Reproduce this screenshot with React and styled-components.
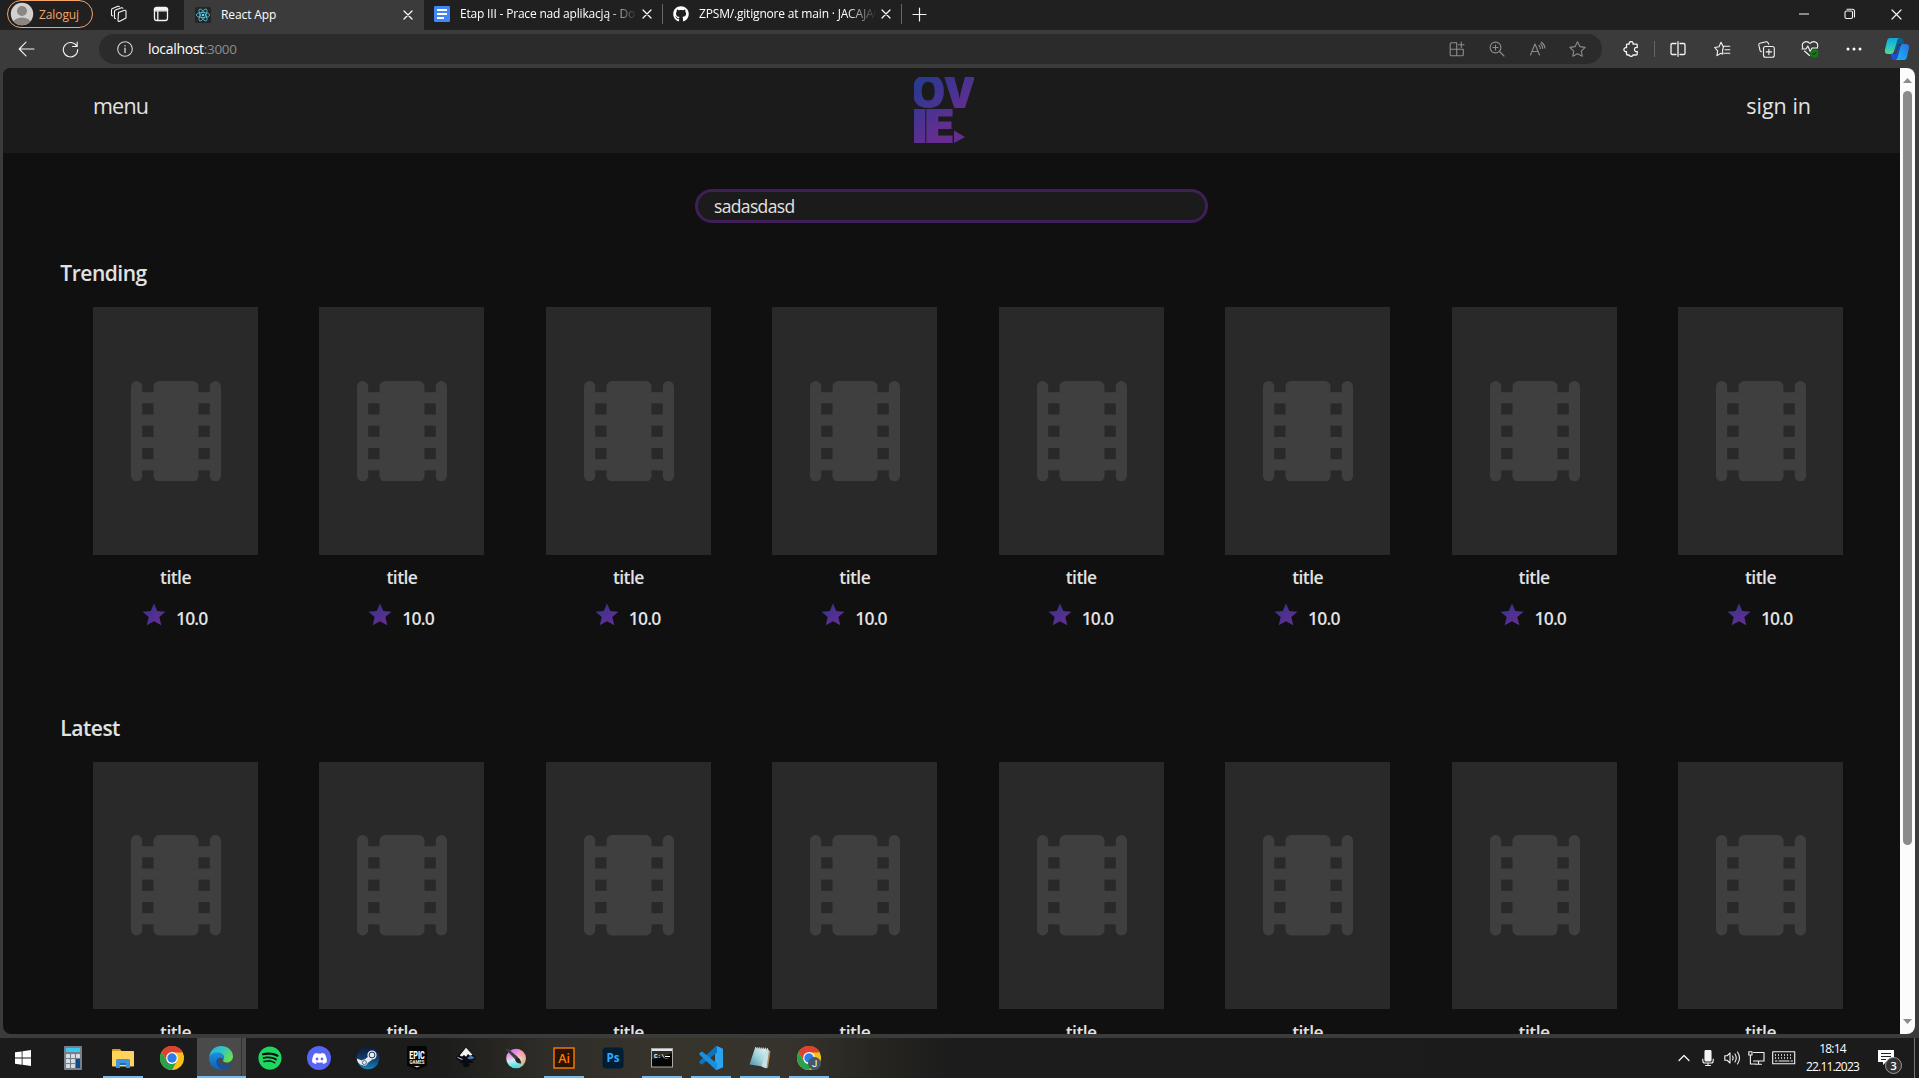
import React from "react";
import styled, { createGlobalStyle } from "styled-components";
import { FaGithub, FaSpotify, FaDiscord } from "react-icons/fa";

const GlobalStyle = createGlobalStyle`
  * { box-sizing: border-box; }
  body { margin: 0; background: #3b3b3b; font-family: "Open Sans", "Noto Sans", sans-serif; overflow: hidden; }
  svg { display: block; flex: none; }
`;

const Screen = styled.div`
  display: flex;
  flex-direction: column;
  width: 1919px;
  height: 1078px;
  background: #3b3b3b;
  overflow: hidden;
`;

/* ---------- browser chrome ---------- */

const TabStrip = styled.div`
  display: flex;
  align-items: flex-start;
  height: 30px;
  padding-left: 7px;
  background: #202020;
  color: #fff;
`;

const LoginPill = styled.div`
  display: flex;
  align-items: center;
  gap: 5px;
  width: 86px;
  height: 28px;
  margin-right: 5px;
  padding-left: 2px;
  border: 1px solid #f3a56a;
  border-radius: 14px;
  color: #f3a56a;
  font-size: 12px;
  letter-spacing: -0.1px;
`;

const IconCell = styled.div`
  display: flex;
  align-items: center;
  justify-content: center;
  flex: none;
  width: ${(p) => p.$w}px;
  height: ${(p) => p.$h || 30}px;
  color: ${(p) => p.$color || "#f4f4f4"};
`;

const Tab = styled.div`
  display: flex;
  align-items: center;
  flex: none;
  width: ${(p) => (p.$active ? 240 : 239)}px;
  height: ${(p) => (p.$active ? 30 : 28)}px;
  margin-left: ${(p) => (p.$active ? 2 : 0)}px;
  padding: 0 11px 0 ${(p) => (p.$active ? 11 : 10)}px;
  background: ${(p) => (p.$active ? "#3b3b3b" : "transparent")};
`;

const TabLabel = styled.span`
  flex: 1;
  min-width: 0;
  margin: 0 6px 0 10px;
  overflow: hidden;
  white-space: nowrap;
  font-size: 12px;
  line-height: 28px;
  letter-spacing: ${(p) => p.$ls}px;
  mask-image: ${(p) => (p.$fade ? "linear-gradient(90deg, #000 84%, transparent 101%)" : "none")};
`;

const Separator = styled.span`
  flex: none;
  width: 1px;
  height: ${(p) => p.$h}px;
  margin: ${(p) => p.$m};
  background: #666;
`;

const WindowControls = styled.div`
  display: flex;
  margin-left: auto;
`;

const Toolbar = styled.div`
  display: flex;
  align-items: center;
  height: 38px;
  padding-left: 5px;
  background: #3b3b3b;
`;

const AddressBar = styled.div`
  display: flex;
  align-items: center;
  width: 1503px;
  height: 30px;
  margin: 0 7px 0 6px;
  padding: 0 5px 0 18px;
  border-radius: 15px;
  background: #2b2b2b;
`;

const Url = styled.div`
  flex: 1;
  margin-left: 15px;
  font-size: 14px;
  line-height: 30px;
  letter-spacing: -0.32px;
  color: #fff;
`;

const Port = styled.span`
  color: #8d8d8d;
  font-size: 13.5px;
`;

/* ---------- page ---------- */

const Viewport = styled.div`
  display: flex;
  width: 1912px;
  height: 966px;
  margin: 0 0 4px 3px;
  border-radius: 8px;
  background: #101010;
  overflow: hidden;
`;

const Page = styled.main`
  width: 1897px;
  height: 966px;
  overflow: hidden;
  color: #e2e2e2;
`;

const Header = styled.header`
  display: grid;
  grid-template-columns: 821px 60px 1fr;
  height: 85px;
  padding: 9px 89px 0 90px;
  background: #1b1b1b;
`;

const HeaderLink = styled.a`
  justify-self: ${(p) => p.$side};
  font-size: 21.5px;
  line-height: 58px;
  letter-spacing: ${(p) => p.$ls}px;
`;

const SearchBox = styled.div`
  width: 513px;
  height: 34px;
  margin: 36px 0 35px 692px;
  padding-left: 16px;
  border: 3px solid #3e1f58;
  border-radius: 17px;
  background: #1b1b1b;
  font-size: 17.5px;
  line-height: 29px;
  letter-spacing: -0.65px;
`;

const Section = styled.section`
  height: 454.6px;
`;

const SectionTitle = styled.h2`
  margin: 0 0 19.2px 57.3px;
  font-size: 21px;
  font-weight: 600;
  line-height: 30px;
  letter-spacing: -0.48px;
`;

const CardRow = styled.div`
  display: flex;
  justify-content: space-between;
  width: 1750px;
  margin-left: 90px;
`;

const Card = styled.article`
  display: flex;
  flex-direction: column;
  align-items: center;
  width: 165px;
  font-size: 17.5px;
  font-weight: 600;
`;

const Poster = styled.div`
  display: flex;
  align-items: center;
  justify-content: center;
  width: 165px;
  height: 247.5px;
  padding-left: 1px;
  background: #292929;
`;

const CardTitle = styled.div`
  margin-top: 10.6px;
  line-height: 24px;
  letter-spacing: -0.55px;
`;

const Rating = styled.div`
  display: flex;
  align-items: flex-start;
  gap: 10px;
  margin-top: 13.7px;
  padding-right: 1.500px;
`;

const Score = styled.span`
  margin-top: 3.5px;
  line-height: 24px;
  letter-spacing: -0.8px;
`;

const Scrollbar = styled.div`
  display: flex;
  flex-direction: column;
  align-items: center;
  width: 15px;
  height: 966px;
  padding: 10px 0;
  background: #fcfcfc;
`;

const Thumb = styled.div`
  width: 9px;
  height: 754px;
  margin: 8px 0 auto;
  border-radius: 5px;
  background: #8b8b8b;
`;

/* ---------- taskbar ---------- */

const TaskbarRoot = styled.div`
  display: flex;
  height: 40px;
  background: linear-gradient(90deg, #1b1b1b 0, #1c1c1b 440px, #2e2c27 540px, #37342c 660px, #35332b 790px, #272621 870px, #1c1c1c 950px, #1b1b1b 100%);
  color: #fff;
`;

const TaskItem = styled.div`
  display: flex;
  align-items: center;
  justify-content: center;
  flex: none;
  width: ${(p) => p.$w || 49}px;
  height: 40px;
  background:
    linear-gradient(${(p) => (p.$open ? "#76b9ed, #76b9ed" : "transparent, transparent")}) center bottom / ${(p) => (p.$active ? 49 : 40)}px 2px no-repeat,
    ${(p) => (p.$active ? "linear-gradient(90deg, #4a4a4a 44px, #303030 44px, #303030 45px, #494949 45px)" : "none")};
  padding-right: ${(p) => (p.$active ? 1 : 0)}px;
`;

const Tray = styled.div`
  display: flex;
  margin-left: auto;
  padding-right: 4px;
`;

const Clock = styled.div`
  width: 67px;
  padding-top: 2px;
  text-align: center;
  font-size: 12px;
  line-height: 18px;
  letter-spacing: -0.83px;
`;

const DesktopEdge = styled.span`
  width: 1px;
  height: 40px;
  margin-left: 1px;
  background: #777;
`;

/* ---------- drawings ---------- */

const Line = ({ w = 16, h = 16, sw = 1.1, children }) => (
  <svg width={w} height={h} viewBox={`0 0 ${w} ${h}`} fill="none" stroke="currentColor" strokeWidth={sw} strokeLinecap="round" strokeLinejoin="round">
    {children}
  </svg>
);

const Avatar = () => (
  <svg width="24" height="24" viewBox="0 0 24 24">
    <defs><clipPath id="avatar"><circle cx="12" cy="12" r="11.2" /></clipPath></defs>
    <g clipPath="url(#avatar)">
      <rect width="24" height="24" fill="#d2d0ce" />
      <circle cx="12" cy="9" r="5" fill="#8a8684" />
      <ellipse cx="12" cy="21.5" rx="9.2" ry="6" fill="#8a8684" />
    </g>
  </svg>
);

const Workspaces = () => (
  <Line w={18} h={18}>
    <path d="M8.5 7.5l6-2.2q1.500-.4 1.500 1v6.600l-6.200 3.300q-1.800.6-1.800-1z" />
    <path d="M5.500 13.500q-1 .2-1-1V6.500q0-1 1-1.400l6-2.300q1-.3 1.400.5" />
    <path d="M2.800 10.800q-1.300.2-1.300-1V4.900q0-1 1-1.400L8 1.300q1-.3 1.400.5" />
  </Line>
);

const TabActions = () => (
  <Line w={16} h={16} sw={1.3}>
    <rect x="1.500" y="1.500" width="13" height="13" rx="2.200" />
    <path d="M1.500 4.800H14.500M4.800 4.800V14" />
    <path d="M2 3.200H14" strokeWidth="2.400" />
  </Line>
);

const ReactLogo = () => (
  <svg width="16" height="16" viewBox="0 0 16 16" fill="none" stroke="#58c4dc" strokeWidth=".8">
    <rect width="16" height="16" rx="1.500" fill="#222628" stroke="none" />
    <circle cx="8" cy="8" r="1.300" fill="#61dafb" stroke="none" />
    {[0, 60, 120].map((a) => <ellipse key={a} cx="8" cy="8" rx="6.700" ry="2.600" transform={`rotate(${a} 8 8)`} />)}
  </svg>
);

const DocsIcon = () => (
  <svg width="16" height="16" viewBox="0 0 16 16">
    <rect width="16" height="16" rx="1.300" fill="#4285f4" />
    <path d="M3 4H13M3 8H13M3 12H10" stroke="#fff" strokeWidth="1.800" />
  </svg>
);

const CloseIcon = ({ s = 10 }) => (
  <Line w={s} h={s} sw={1.2}><path d={`M1 1L${s - 1} ${s - 1}M${s - 1} 1L1 ${s - 1}`} /></Line>
);

const Copilot = () => (
  <svg width="26" height="24" viewBox="0 0 26 24">
    <defs>
      <linearGradient id="cpA" x1="0" y1="0" x2="0" y2="1"><stop offset="0" stopColor="#12a5d8" /><stop offset=".4" stopColor="#1ec0d3" /><stop offset="1" stopColor="#57d98b" /></linearGradient>
      <linearGradient id="cpB" x1="1" y1="0" x2="0" y2="1"><stop offset="0" stopColor="#2c6fe0" /><stop offset="1" stopColor="#18b9f5" /></linearGradient>
    </defs>
    <path d="M11 1h5.500q1.800 0 2.500 2l1 4h-4q-2 0-2.600 2L11 17z" fill="#0b5f8f" />
    <path d="M6.500 17H12l3-8 2 0-5 14H9.500Q8 23 7.500 21z" fill="#1c4fd6" />
    <path d="M6 1h9q-1.500 1-2 3l-3 10.500Q9.300 17 7 17H4Q.2 17 1 12.500L3 4Q3.700 1 6 1z" fill="url(#cpA)" />
    <path d="M18.500 7H22q3.700 0 2.900 4.500L23 20q-.7 3-3 3h-8.500q1.500-.8 2-2.500l3-10.500Q17 7 18.500 7z" fill="url(#cpB)" />
  </svg>
);

const MovieLogo = () => (
  <svg width="60" height="66" viewBox="0 0 60 66">
    <defs>
      <linearGradient id="brand" gradientUnits="userSpaceOnUse" x1="5" y1="8" x2="38" y2="48">
        <stop offset="0" stopColor="#2b3990" /><stop offset="1" stopColor="#662d91" />
      </linearGradient>
      <clipPath id="brandShape">
        <text transform="translate(-3.800 30.500) scale(.98 1)" fontFamily="Open Sans" fontWeight="800" fontSize="46">O</text>
        <text transform="translate(29.300 31)" fontFamily="Open Sans" fontWeight="800" fontSize="47">V</text>
        <text transform="translate(-5.200 66) scale(1.300 1)" fontFamily="Open Sans" fontWeight="800" fontSize="47">I</text>
        <text transform="translate(7.600 66) scale(1.320 1)" fontFamily="Open Sans" fontWeight="800" fontSize="47">E</text>
        <path d="M40 53.500L51 60L40 66z" />
      </clipPath>
    </defs>
    <rect width="60" height="66" fill="url(#brand)" clipPath="url(#brandShape)" />
  </svg>
);

const Film = () => (
  <svg width="90" height="100.5" viewBox="0 0 8 9" preserveAspectRatio="none" fill="#3f3f3f">
    <rect x="0" y="0" width="1" height="9" rx=".5" />
    <rect x="7" y="0" width="1" height="9" rx=".5" />
    <rect x="2" y="0" width="4" height="9" rx=".5" />
    {[1, 3, 5, 7].map((y) => <rect key={y} x=".5" y={y} width="7" height="1" />)}
  </svg>
);

const RatingStar = () => (
  <svg width="24" height="23" viewBox="0 0 24 23">
    <defs><linearGradient id="star" x1="0" y1="0" x2=".7" y2="1"><stop offset="0" stopColor="#2f3590" /><stop offset="1" stopColor="#662d91" /></linearGradient></defs>
    <path d="M12 .5l3.300 7.400 8.200.8-6.200 5.200 2 8.300L12 18.200l-7.300 4 2-8.300L.5 8.700l8.200-.8z" fill="url(#star)" />
  </svg>
);

const Arrow = ({ down }) => (
  <svg width="9" height="5" viewBox="0 0 9 5"><path d={down ? "M0 0H9L4.500 5z" : "M0 5H9L4.500 0z"} fill="#8b8b8b" /></svg>
);

const Art = ({ w = 24, h = 24, children }) => <svg width={w} height={h} viewBox={`0 0 ${w} ${h}`}>{children}</svg>;

const WindowsLogo = () => (
  <Art w={16} h={16}><path d="M0 2.300L6.700 1.400V7.600H0zM7.500 1.300L16 0V7.600H7.500zM0 8.400H6.700V14.700L0 13.700zM7.500 8.400H16V16L7.500 14.800z" fill="#fff" /></Art>
);

const Calculator = () => (
  <Art w={18}>
    <rect width="18" height="24" rx="1" fill="#75808b" />
    <rect x="2" y="2" width="14" height="4" fill="#3cc8f5" />
    {[8, 13, 18].map((y) => [2, 7, 12].map((x) => (
      <rect key={`${x}-${y}`} x={x} y={y} width="4" height="4" rx=".4" fill="#d8dde2" />
    )))}
    <rect x="12" y="13" width="4" height="9" fill="#0e4a8c" />
  </Art>
);

const Explorer = () => (
  <Art w={22} h={20}>
    <path d="M0 1.500Q0 1 .8 1H8l2 2.500V8H0z" fill="#d99a18" />
    <rect y="3" width="22" height="15.500" rx=".8" fill="#ffd25f" />
    <path d="M4 20V12.500Q4 11 5.500 11h11Q18 11 18 12.500V20H14V15H8v5z" fill="#3e94da" />
    <path d="M8 15h6v2H8z" fill="#1f6fb8" />
  </Art>
);

const Chrome = ({ badge }) => (
  <Art>
    <circle cx="12" cy="12" r="12" fill="#fbc116" />
    <path d="M12 6.500H22.700A12 12 0 0 0 1.600 6L6.800 15z" fill="#dd4132" />
    <path d="M1.600 6L6.800 15Q9 18.500 12 18L17 15L12 24A12 12 0 0 1 1.600 6z" fill="#2aa14c" />
    <circle cx="12" cy="12" r="5.900" fill="#fff" />
    <circle cx="12" cy="12" r="4.700" fill="#2f7de9" />
    {badge && <circle cx="17.500" cy="17.500" r="6.500" fill="#455a68" />}
    {badge && <text x="17.500" y="21" textAnchor="middle" fontSize="9.500" fontFamily="Roboto" fill="#fff">J</text>}
  </Art>
);

const Edge = () => (
  <Art>
    <defs>
      <linearGradient id="edgeA" x1="0" y1="0" x2="1" y2=".5"><stop offset="0" stopColor="#2fa8e0" /><stop offset=".55" stopColor="#33c5c4" /><stop offset="1" stopColor="#68dd55" /></linearGradient>
      <linearGradient id="edgeB" x1="0" y1="0" x2="0" y2="1"><stop offset="0" stopColor="#1b8fe0" /><stop offset="1" stopColor="#0c62b6" /></linearGradient>
    </defs>
    <path d="M.2 11C1 4.500 6 0 12 0c7 0 12 5 12 10.500 0 3.800-3 6-6 6-2.500 0-4-1-4-2 0-.8 1-1.200 1-3C15 9 12.500 7 9 7 5 7 1.500 8.700.2 11z" fill="url(#edgeA)" />
    <path d="M0 12C.6 8.500 4.500 6.500 8.500 6.500c4 0 6.500 2.500 6.500 5 0 1-.4 1.800-.9 2.400C13.500 10.500 7.500 11 7.500 16c0 4 4 7.500 8 7.300C8 25.500 0 20.500 0 12z" fill="url(#edgeB)" />
    <path d="M9.500 12Q7 13.700 7.500 17c.7 4 5 7 9 6 3-.8 5-3 5.700-4.800.2-.4-.1-.6-.5-.4C15 21 9 18 9.500 12z" fill="#1452a0" />
  </Art>
);

const SpotifyIcon = () => (
  <Art>
    <circle cx="12" cy="12" r="11.500" fill="#0b0b0b" />
    <FaSpotify size={24} color="#1ed760" />
  </Art>
);

const DiscordIcon = () => (
  <Art>
    <circle cx="12" cy="12" r="12" fill="#5865f2" />
    <FaDiscord x="4.500" y="4.500" width="15" height="15" color="#fff" />
  </Art>
);

const Steam = () => (
  <Art>
    <defs><linearGradient id="steam" x1="0" y1="0" x2="0" y2="1"><stop offset="0" stopColor="#101a38" /><stop offset=".5" stopColor="#123a68" /><stop offset="1" stopColor="#1683b8" /></linearGradient></defs>
    <circle cx="12" cy="12" r="11.300" fill="url(#steam)" />
    <path d="M.8 12.500L7 15l5-4.200L14 12l2 1.800-6 4.400L5 19Q1.500 17 .8 12.500z" fill="#e8ecf0" />
    <circle cx="8.400" cy="16.600" r="3.100" fill="#e8ecf0" />
    <circle cx="8.400" cy="16.600" r="2" fill="none" stroke="#3a5f85" strokeWidth=".9" />
    <circle cx="16" cy="9" r="4.600" fill="#e8ecf0" />
    <circle cx="16" cy="9" r="2.900" fill="none" stroke="#1a3558" strokeWidth="1" />
  </Art>
);

const Epic = () => (
  <Art w={20}>
    <path d="M1.500 0h17q1.500 0 1.500 1.500V19.500L10 24 0 19.500V1.500Q0 0 1.500 0z" fill="#050505" />
    <text x="10" y="12.500" textAnchor="middle" fontFamily="Roboto" fontWeight="800" fontSize="11" fill="#fff" textLength="15.500" lengthAdjust="spacingAndGlyphs">EPIC</text>
    <text x="10" y="17.500" textAnchor="middle" fontFamily="Roboto" fontWeight="900" fontSize="4.500" fill="#ddd" textLength="15" lengthAdjust="spacingAndGlyphs">GAMES</text>
    <path d="M7 20h6l-3 1.500z" fill="#ddd" />
  </Art>
);

const Inkscape = () => (
  <Art w={22}>
    <path d="M11 1L20.500 11q1.200 1.600-.6 2.400l-4.500 1.200 3.600 1.300-2.500 1.100-3-.1 1.500 2.600-4 2-3.500-2 1.500-2-5-.7 2.500-1.500-4.500-1.900Q.3 12.500 1.500 11z" fill="#090b10" />
    <path d="M11 1.800L17.500 8.800 15 9.800 13 8l-2 2.800L9 9l-2 1.600-2.300-1z" fill="#f4f4f4" />
    <path d="M16 9.500l4 2.500-5 1.600-3-1.600z" fill="#4a78b5" />
    <path d="M2.500 11.500l5 2" stroke="#c7ccd2" />
  </Art>
);

const Krita = () => (
  <Art w={22} h={22}>
    <defs>
      <linearGradient id="krA" x1=".2" y1="0" x2=".4" y2="1"><stop offset="0" stopColor="#d86cf0" /><stop offset=".4" stopColor="#f2a4e2" /><stop offset=".6" stopColor="#c8f0f2" /><stop offset="1" stopColor="#35dbe8" /></linearGradient>
      <linearGradient id="krB"><stop offset=".5" stopColor="#ffe24a" stopOpacity="0" /><stop offset="1" stopColor="#ff8a7a" stopOpacity=".8" /></linearGradient>
    </defs>
    <circle cx="12" cy="11.500" r="9.800" fill="url(#krA)" />
    <circle cx="12" cy="11.500" r="9.800" fill="url(#krB)" />
    <path d="M1 1.500L5 2.500 14 10l-2.500 2.800z" fill="#3f3f43" />
    <path d="M11 12.500l2.200-2.300q3.500 1 4 6.300-5 .3-6.200-4z" fill="#2a2226" />
  </Art>
);

const Illustrator = () => (
  <Art w={22} h={22}>
    <rect x="1" y="1" width="20" height="20" fill="#271400" stroke="#ff7c00" strokeWidth="1.400" />
    <text x="11" y="15.500" textAnchor="middle" fontFamily="Open Sans" fontWeight="600" fontSize="12.500" fill="#ff7c00">Ai</text>
  </Art>
);

const Photoshop = () => (
  <Art w={22} h={22}>
    <rect x=".5" y=".5" width="21" height="21" rx="3.500" fill="#001d34" />
    <text x="11" y="15.300" textAnchor="middle" fontFamily="Open Sans" fontWeight="700" fontSize="11.500" fill="#31a8ff">Ps</text>
  </Art>
);

const Terminal = () => (
  <Art w={22} h={20}>
    <rect x=".5" y=".5" width="21" height="18.500" fill="#050505" stroke="#a9a9a9" />
    <rect x="1" y="1" width="20" height="2" fill="#e6e6e6" />
    <path d="M1 11Q12 10 21 5V3H1z" fill="#2b2b2b" />
    <text x="3" y="9.500" fontFamily="Liberation Mono" fontWeight="700" fontSize="6" fill="#fff">C:\_</text>
    <path d="M14 8.500h5" stroke="#fff" />
  </Art>
);

const VsCode = () => (
  <Art>
    <path d="M18 0L24 2.800V21.200L18 24l-2-1V1z" fill="#29a5f0" />
    <path d="M18 6.500L3.500 18.200Q2.800 18.700 2.200 18.200L.5 16.700q-.8-.8 0-1.500L16.500.6Q17.500-.2 18 0z" fill="#0a74c0" />
    <path d="M18 17.500L3.500 5.800Q2.800 5.300 2.200 5.800L.5 7.300q-.8.8 0 1.500L16.500 23.400Q17.500 24.200 18 24z" fill="#1a8fdc" />
  </Art>
);

const Notepad = () => (
  <Art>
    <defs><linearGradient id="note" x1="0" y1="1" x2="1" y2="0"><stop offset="0" stopColor="#46909e" /><stop offset=".5" stopColor="#9fd0da" /><stop offset="1" stopColor="#e8f4f4" /></linearGradient></defs>
    <path d="M17 4l5.500 1L20 22l-5-1z" fill="#a98b58" />
    <path d="M7 2L18.500 3 15 20.500 1.500 18.500z" fill="url(#note)" />
    <path d="M18.500 3l2.500 1-2.500 18.500-5-2z" fill="#c9dfe3" />
    <path d="M7 2L20 3" stroke="#ccc" strokeWidth="2" strokeDasharray="1.200 .8" />
  </Art>
);

const Notification = () => (
  <Art w={26} h={32}>
    <path d="M1 8H17V20H9L6 23V20H1z" fill="#fff" />
    <path d="M4 11.500H14M4 14.500H14M4 17.500H9" stroke="#222" strokeWidth="1" />
    <circle cx="16.500" cy="23.500" r="8" fill="#333" stroke="#999" />
    <text x="16.500" y="27.600" textAnchor="middle" fontFamily="Open Sans" fontWeight="600" fontSize="11.500" fill="#fff">3</text>
  </Art>
);

/* ---------- sections ---------- */

const MovieSection = ({ name }) => (
  <Section>
    <SectionTitle>{name}</SectionTitle>
    <CardRow>
      {Array.from({ length: 8 }, (_, i) => (
        <Card key={i}>
          <Poster><Film /></Poster>
          <CardTitle>title</CardTitle>
          <Rating><RatingStar /><Score>10.0</Score></Rating>
        </Card>
      ))}
    </CardRow>
  </Section>
);

const BrowserTabs = () => (
  <TabStrip>
    <LoginPill><Avatar />Zaloguj</LoginPill>
    <IconCell $w={42} $h={28}><Workspaces /></IconCell>
    <IconCell $w={42} $h={28}><TabActions /></IconCell>
    <Tab $active><ReactLogo /><TabLabel $ls={-0.1}>React App</TabLabel><CloseIcon /></Tab>
    <Tab><DocsIcon /><TabLabel $fade $ls={-0.19}>Etap III - Prace nad aplikacją - Dokumenty</TabLabel><CloseIcon /></Tab>
    <Separator $h={20} $m="4px 0 0 -1px" />
    <Tab><FaGithub size={16} /><TabLabel $fade $ls={-0.18}>ZPSM/.gitignore at main · JACAJACA</TabLabel><CloseIcon /></Tab>
    <Separator $h={20} $m="4px 0 0 -1px" />
    <IconCell $w={35} $h={28}><Line w={15} h={15} sw={1.2}><path d="M7.500 1V14M1 7.500H14" /></Line></IconCell>
    <WindowControls>
      <IconCell $w={46} $h={28}><Line w={10} h={2}><path d="M0 1H10" /></Line></IconCell>
      <IconCell $w={46} $h={28}><Line w={12} h={12}><rect x="1" y="3" width="7.500" height="7.500" rx="1.500" /><path d="M3 1.200h5.500q2 0 2 2V9" /></Line></IconCell>
      <IconCell $w={46} $h={28}><CloseIcon s={11} /></IconCell>
    </WindowControls>
  </TabStrip>
);

const BrowserToolbar = () => (
  <Toolbar>
    <IconCell $w={43}><Line w={17}><path d="M16 8H1.200M8 1.200L1.200 8 8 14.800" /></Line></IconCell>
    <IconCell $w={45}><Line w={17} h={17}><path d="M14.800 5.200A7.200 7.200 0 1 0 15.700 8.500M15.200 1V5.500H10.600" /></Line></IconCell>
    <AddressBar>
      <IconCell $w={16} $color="#d0d0d0"><Line><circle cx="8" cy="8" r="7.300" /><path d="M8 7.200V11.500M8 4.700V4.900" strokeWidth="1.400" /></Line></IconCell>
      <Url>localhost<Port>:3000</Port></Url>
      <IconCell $w={40} $color="#8c8c8c"><Line><path d="M7.500 1.700H2.500Q1.200 1.700 1.200 3V13.500Q1.200 14.800 2.500 14.800H13Q14.300 14.800 14.300 13.500V8.300H1.200M7.700 1.700V14.800M12.300 1V6.500M9.500 3.700H15" /></Line></IconCell>
      <IconCell $w={40} $color="#8c8c8c"><Line><circle cx="6.500" cy="6.500" r="5.400" /><path d="M10.500 10.500L15 15M6.500 4V9M4 6.500H9" /></Line></IconCell>
      <IconCell $w={40} $color="#8c8c8c"><Line w={17}><path d="M1.500 14L6 3 10.500 14M3 10.500H9M10 4.500Q11.300 5.800 11.300 7.800M11.700 2.800Q13.700 4.800 13.700 7.500M12.300 1.200Q15.800 3.500 15.900 7" /></Line></IconCell>
      <IconCell $w={40} $color="#8c8c8c"><Line w={17} h={16}><path d="M8.500.8l2.350 4.800 5.300.75-3.850 3.700.95 5.200L8.500 12.800l-4.750 2.450.95-5.200L.85 6.350l5.300-.75z" /></Line></IconCell>
    </AddressBar>
    <IconCell $w={44}><Line sw={1.3}><path d="M6.200 3.200A2 2 0 1 1 10 3.200H13.500Q14.200 3.200 14.200 4V6.500Q11.500 6.200 11.500 8.500T14.200 10.500V13Q14.200 14 13.200 14H10A2 2 0 0 1 6.200 14H4.500Q3.500 14 3.500 13V10.500A2 2 0 1 1 3.500 6.700V4Q3.500 3.200 4.300 3.200z" /></Line></IconCell>
    <Separator $h={16} $m="0 1px 0 1px" />
    <IconCell $w={44}><Line sw={1.3}><path d="M6 2.500H2.300Q1 2.500 1 3.800V12.200Q1 13.500 2.300 13.500H6M8 .7V15.300M10 2.500H13.700Q15 2.500 15 3.800V12.200Q15 13.500 13.700 13.500H10" /></Line></IconCell>
    <IconCell $w={44}><Line w={17}><path d="M8.500 13L7 12.200 2.900 14.600 3.700 9.900.7 6.500 5 5.700 7 1.300 9 5.200H15.800M11 8.700H15.800M10.500 12.300H15.800M9.500 5.500L8.500 9.500 9 13" /></Line></IconCell>
    <IconCell $w={44}><Line w={17} h={17}><rect x="5.500" y="5.500" width="10.800" height="10.800" rx="2" /><path d="M10.900 8.200V13.600M8.200 10.900H13.600M3.500 10.700Q2.300 10.500 2 9.300L.8 4Q.6 2.700 1.900 2.300L8 .8Q9.300.5 10 1.700L10.800 3.300" /></Line></IconCell>
    <IconCell $w={44}>
      <Line w={18} h={18}>
        <path d="M1.800 8Q.2 4 3 2.200 6.500.6 9 3.500 11.500.6 15 2.200 17.800 4 16.200 8M1 9H5L6.800 6 9.200 11.500 11 8H16.500M3.500 11L8.500 15.500" />
        <circle cx="13.300" cy="13.500" r="4.100" fill="#107c10" stroke="none" />
        <path d="M11.700 13.700L12.800 14.700 14.900 12.500" stroke="#083f08" />
      </Line>
    </IconCell>
    <IconCell $w={44}><Art w={16} h={4}><circle cx="2" cy="2" r="1.500" fill="#fff" /><circle cx="8" cy="2" r="1.500" fill="#fff" /><circle cx="14" cy="2" r="1.500" fill="#fff" /></Art></IconCell>
    <IconCell $w={41}><Copilot /></IconCell>
  </Toolbar>
);

const Taskbar = () => (
  <TaskbarRoot>
    <TaskItem $w={46}><WindowsLogo /></TaskItem>
    <TaskItem $w={54}><Calculator /></TaskItem>
    <TaskItem $w={46} $open><Explorer /></TaskItem>
    <TaskItem $w={51}><Chrome /></TaskItem>
    <TaskItem $w={49} $open $active><Edge /></TaskItem>
    <TaskItem $w={48}><SpotifyIcon /></TaskItem>
    <TaskItem><DiscordIcon /></TaskItem>
    <TaskItem><Steam /></TaskItem>
    <TaskItem><Epic /></TaskItem>
    <TaskItem><Inkscape /></TaskItem>
    <TaskItem><Krita /></TaskItem>
    <TaskItem $open><Illustrator /></TaskItem>
    <TaskItem><Photoshop /></TaskItem>
    <TaskItem $open><Terminal /></TaskItem>
    <TaskItem $open><VsCode /></TaskItem>
    <TaskItem $open><Notepad /></TaskItem>
    <TaskItem $open><Chrome badge /></TaskItem>
    <Tray>
      <IconCell $w={24} $h={40}><Line w={12} h={8} sw={1.3}><path d="M1 6.500L6 1.500 11 6.500" /></Line></IconCell>
      <IconCell $w={24} $h={40}><Line w={12} h={16}><rect x="3" y=".5" width="6" height="10.500" rx="1" fill="currentColor" /><path d="M.8 9V11Q.8 13 3 13H9Q11.200 13 11.200 11V9M6 13V15.300M3.500 15.500H8.500" /></Line></IconCell>
      <IconCell $w={24} $h={40}><Line w={17} h={14}><path d="M.8 4.800H3L6 2V12L3 9.200H.8zM8.500 5Q9.800 7 8.500 9M11 3Q13.500 7 11 11M13.500 1Q17.500 7 13.500 13" /></Line></IconCell>
      <IconCell $w={24} $h={40}><Line w={17} h={14}><path d="M5.500 1.500H16V10H5.500M.8.800H4V4H.8zM2.400 4V13H8M10.500 10V13M7.500 13.200H13.500" /></Line></IconCell>
      <IconCell $w={31} $h={40}>
        <Line w={24} h={14}><rect x=".7" y=".7" width="22" height="12" /><path d="M3 4H21M3 7H21" strokeDasharray="1 2" strokeLinecap="butt" strokeWidth="1.500" /><path d="M3.500 10H5M7 10H17M19 10H20.500" /></Line>
      </IconCell>
      <Clock>18:14<br />22.11.2023</Clock>
      <IconCell $w={47} $h={40}><Notification /></IconCell>
      <DesktopEdge />
    </Tray>
  </TaskbarRoot>
);

export default function App() {
  return (
    <Screen>
      <GlobalStyle />
      <BrowserTabs />
      <BrowserToolbar />
      <Viewport>
        <Page>
          <Header>
            <HeaderLink $side="start" $ls={-0.8}>menu</HeaderLink>
            <MovieLogo />
            <HeaderLink $side="end" $ls={0}>sign in</HeaderLink>
          </Header>
          <SearchBox>sadasdasd</SearchBox>
          <MovieSection name="Trending" />
          <MovieSection name="Latest" />
        </Page>
        <Scrollbar>
          <Arrow />
          <Thumb />
          <Arrow down />
        </Scrollbar>
      </Viewport>
      <Taskbar />
    </Screen>
  );
}
